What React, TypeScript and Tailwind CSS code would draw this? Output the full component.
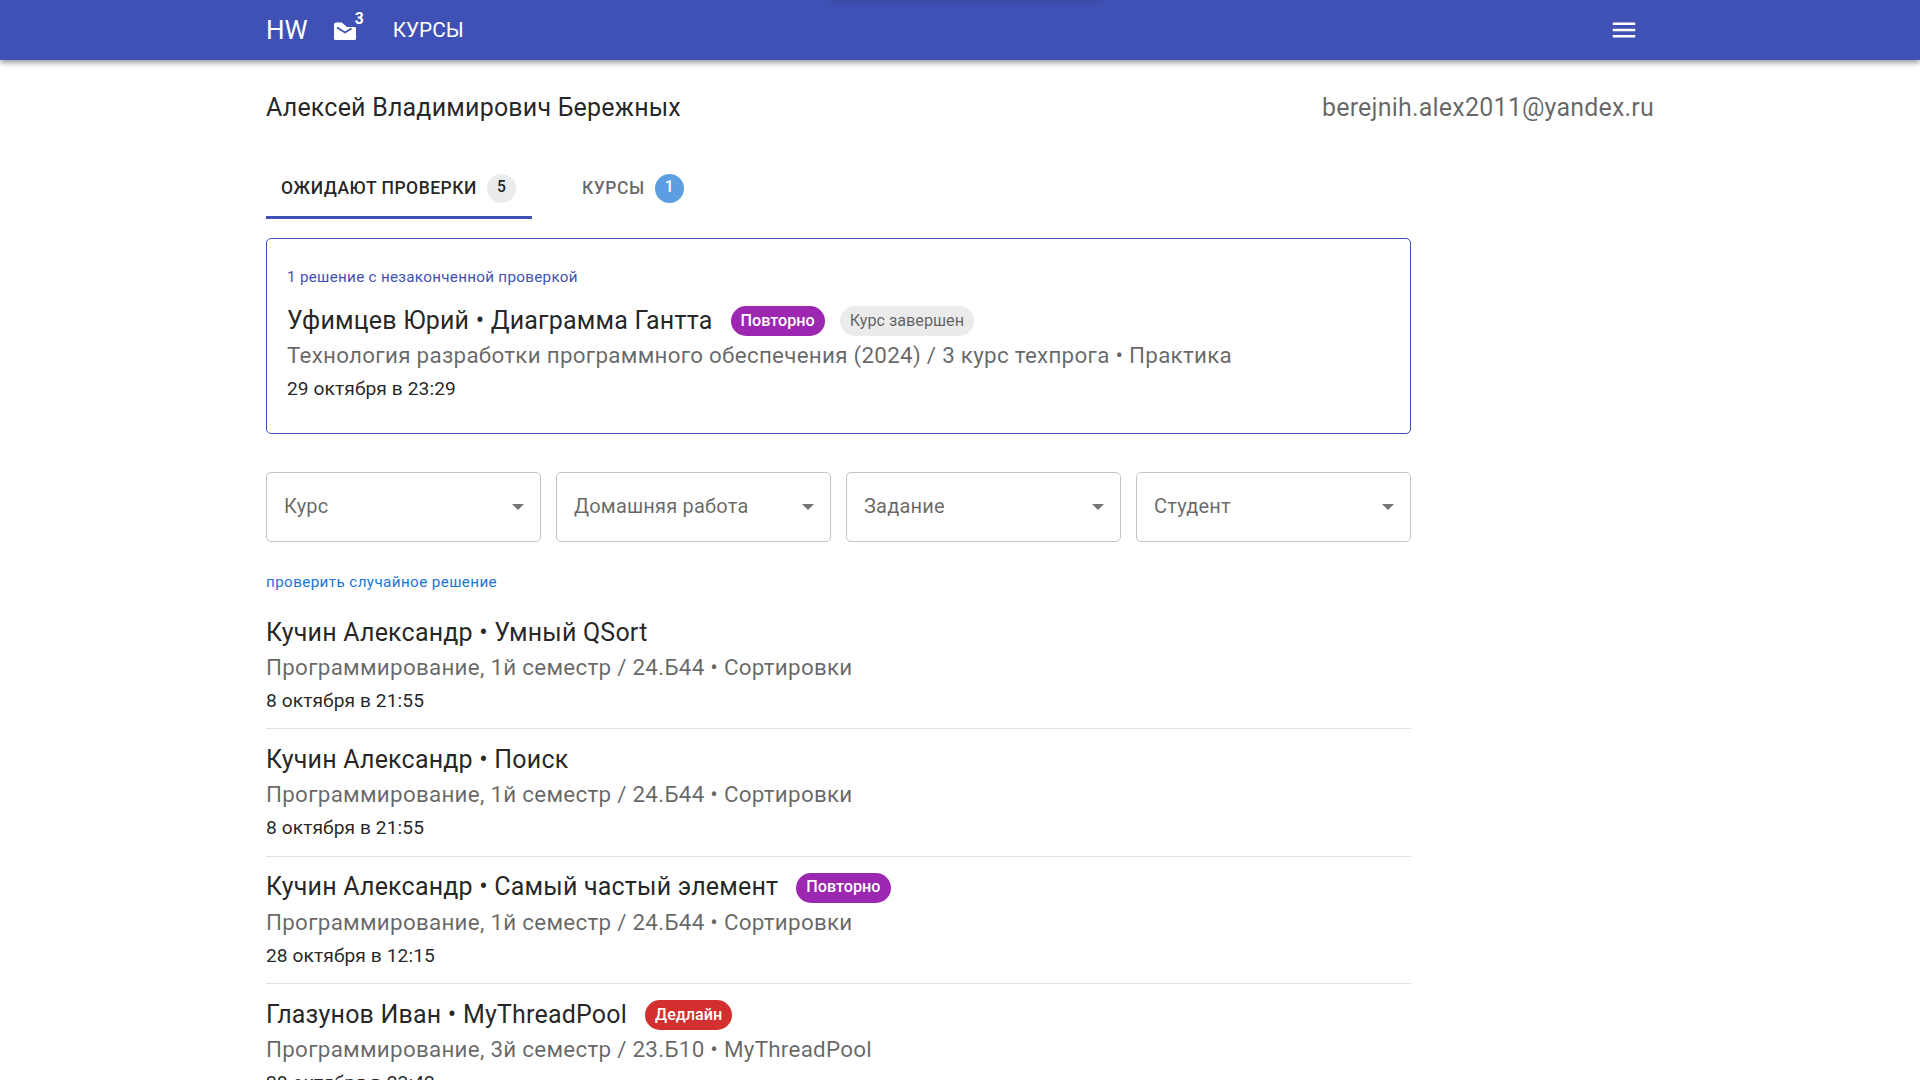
const SOLUTIONS = [
  { title: 'Кучин Александр • Умный QSort', course: 'Программирование, 1й семестр / 24.Б44 • Сортировки', date: '8 октября в 21:55' },
  { title: 'Кучин Александр • Поиск', course: 'Программирование, 1й семестр / 24.Б44 • Сортировки', date: '8 октября в 21:55' },
  { title: 'Кучин Александр • Самый частый элемент', course: 'Программирование, 1й семестр / 24.Б44 • Сортировки', date: '28 октября в 12:15', chip: 'retry' },
  { title: 'Глазунов Иван • MyThreadPool', course: 'Программирование, 3й семестр / 23.Б10 • MyThreadPool', date: '28 октября в 23:42', chip: 'deadline' },
]

const FILTERS = ['Курс', 'Домашняя работа', 'Задание', 'Студент']

function Chip({ kind }: { kind: string }) {
  if (kind === 'retry') {
    return <span className="ml-[18px] mt-[1px] flex h-[30px] items-center rounded-full bg-[#9c27b0] px-[10px] text-[16.2px] font-medium tracking-normal text-white">Повторно</span>
  }
  if (kind === 'deadline') {
    return <span className="ml-[18px] mt-[1px] flex h-[30px] items-center rounded-full bg-[#d32f2f] px-[10px] text-[16.2px] font-medium tracking-normal text-white">Дедлайн</span>
  }
  return <span className="ml-[15px] mt-[1px] flex h-[30px] items-center rounded-full bg-[#ebebeb] px-[10px] text-[16.2px] tracking-normal text-[#00000099]">Курс завершен</span>
}

function Solution({ title, course, date, chip, extra }: { title: string; course: string; date: string; chip?: string; extra?: string }) {
  return (
    <>
      <div className="mt-[1px] flex h-[35px] items-center text-[25px] tracking-[0.2px] text-[#000000de]">
        <span>{title}</span>
        {chip && <Chip kind={chip} />}
        {extra && <Chip kind={extra} />}
      </div>
      <p className="h-[34px] text-[22.4px] leading-[34px] tracking-[0.27px] text-[#00000099]">{course}</p>
      <p className="h-[34px] text-[19.2px] leading-[34px] tracking-[0.08px] text-[#000000de]">{date}</p>
    </>
  )
}

export default function App() {
  return (
    <div className="h-screen overflow-hidden bg-white font-['Roboto',sans-serif]">
      <header className="relative flex h-[60px] justify-center bg-[#3f51b5] text-white shadow-[0_2px_5px_rgba(0,0,0,0.3),0_4px_6px_rgba(0,0,0,0.14)]">
        {/* тень от всплывающего блока над шапкой */}
        <div className="absolute -top-[20px] left-[830px] h-[20px] w-[270px] shadow-[0_1px_6px_rgba(0,0,0,0.14)]" />
        <div className="flex w-[1388px] items-center">
          <span className="text-[26px]">HW</span>
          <span className="relative ml-[26px] mt-[1px] flex">
            <svg width="22" height="18" viewBox="0 0 22 18" fill="currentColor">
              <path d="M2 0.5 L7 0.5 Q8 0.5 9 1.5 L13 5 L20.5 5 Q22 5 22 6.5 L22 16.5 Q22 18 20.5 18 L1.5 18 Q0 18 0 16.5 L0 2.5 Q0 0.5 2 0.5 Z" />
              <path d="M3 5.5 L11 10.5 L17.5 6.5" fill="none" stroke="#3f51b5" strokeWidth="1.8" />
            </svg>
            <span className="absolute -right-[8px] -top-[14px] text-[15.6px] font-bold">3</span>
          </span>
          <span className="ml-[37px] mt-[1px] text-[20.8px]">КУРСЫ</span>
          <svg className="ml-auto mr-[15px]" width="30" height="30" viewBox="0 0 24 24" fill="currentColor">
            <path d="M3 18h18v-2H3v2zm0-5h18v-2H3v2zm0-7v2h18V6H3z" />
          </svg>
        </div>
      </header>

      <main className="mx-auto w-[1388px] pt-[29px]">
        <div className="flex h-[38px] items-center justify-between text-[25px] tracking-[0.2px]">
          <span className="text-[#000000de]">Алексей Владимирович Бережных</span>
          <span className="text-[#00000099]">berejnih.alex2011@yandex.ru</span>
        </div>

        <div className="mt-[33px] flex h-[59px]">
          <div className="flex w-[266px] items-center border-b-[3px] border-[#3f51b5] pl-[15px]">
            <span className="text-[17.5px] font-medium tracking-[0.5px] text-[#000000de]">ОЖИДАЮТ ПРОВЕРКИ</span>
            <span className="ml-[10px] flex h-[29px] w-[29px] items-center justify-center rounded-full bg-[#ebebeb] text-[15.6px] font-medium text-[#000000de]">5</span>
          </div>
          <div className="ml-[50px] flex items-center pb-[3px]">
            <span className="text-[17.5px] font-medium tracking-[0.5px] text-[#00000099]">КУРСЫ</span>
            <span className="ml-[10px] flex h-[29px] w-[29px] items-center justify-center rounded-full bg-[#5c9ee0] text-[15.6px] font-medium text-white">1</span>
          </div>
        </div>

        <section className="mt-[19px] h-[196px] w-[1145px] rounded-[5px] border border-[#3f51b5] px-[20px] pt-[26px]">
          <p className="h-[24px] text-[15.2px] leading-[24px] tracking-[0.3px] text-[#3f51b5]">1 решение с незаконченной проверкой</p>
          <div className="mt-[14px]">
            <Solution
              title="Уфимцев Юрий • Диаграмма Гантта"
              course="Технология разработки программного обеспечения (2024) / 3 курс техпрога • Практика"
              date="29 октября в 23:29"
              chip="retry"
              extra="done"
            />
          </div>
        </section>

        <div className="mt-[38px] grid w-[1145px] grid-cols-4 gap-[15px]">
          {FILTERS.map(label => (
            <div key={label} className="flex h-[70px] items-center justify-between rounded-[5px] border border-[#c4c4c4] pl-[17px] pr-[16px]">
              <span className="-mt-[2px] text-[20px] tracking-[0.2px] text-[#00000099]">{label}</span>
              <span className="h-0 w-0 border-x-[6px] border-t-[6px] border-x-transparent border-t-[#757575]" />
            </div>
          ))}
        </div>

        <p className="mt-[28px] h-[24px] text-[15.2px] leading-[24px] tracking-[0.4px] text-[#1976d2]">проверить случайное решение</p>

        <ul className="w-[1145px] pt-[8px]">
          {SOLUTIONS.map(item => (
            <li key={item.title + item.date} className="border-b border-[#e0e0e0] pb-[10.3px] pt-[12px]">
              <Solution title={item.title} course={item.course} date={item.date} chip={item.chip} />
            </li>
          ))}
        </ul>
      </main>
    </div>
  )
}
